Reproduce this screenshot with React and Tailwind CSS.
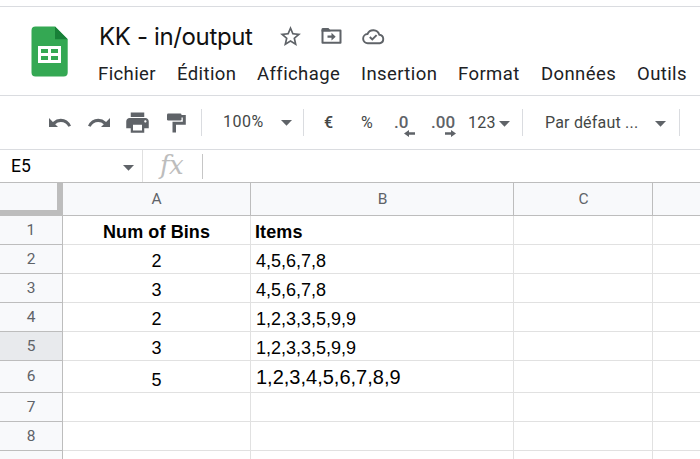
import { MdStarBorder, MdPrint } from 'react-icons/md';

const menus = [
  ['Fichier', 'w-[79px]'],
  ['Édition', 'w-[80px]'],
  ['Affichage', 'w-[104px]'],
  ['Insertion', 'w-[97px]'],
  ['Format', 'w-[83px]'],
  ['Données', 'w-[96px]'],
  ['Outils', 'w-[60px]'],
];

const rows = [
  { n: 1, a: 'Num of Bins', b: 'Items', bold: true },
  { n: 2, a: '2', b: '4,5,6,7,8' },
  { n: 3, a: '3', b: '4,5,6,7,8' },
  { n: 4, a: '2', b: '1,2,3,3,5,9,9' },
  { n: 5, a: '3', b: '1,2,3,3,5,9,9', selected: true },
  { n: 6, a: '5', b: '1,2,3,4,5,6,7,8,9', tall: true },
  { n: 7, a: '', b: '' },
  { n: 8, a: '', b: '' },
  { n: '', a: '', b: '' },
];

function Caret({ className = '' }) {
  return (
    <svg className={'shrink-0 ' + className} width="11" height="6" viewBox="0 0 11 6">
      <path d="M0 0h11L5.5 5.8z" fill="#5f6368" />
    </svg>
  );
}

function Divider({ className = '' }) {
  return <div className={'h-[27px] w-px shrink-0 bg-[#dadce0] ' + className} />;
}

function SheetsLogo() {
  return (
    <svg className="ml-[31px] mt-[19px] shrink-0" width="38" height="51" viewBox="0 0 38 51">
      <path d="M4.5.5H24l12.7 12.7v33.3a4 4 0 0 1-4 4H4.5a4 4 0 0 1-4-4v-42a4 4 0 0 1 4-4z" fill="#34a853" />
      <path d="M24 .5l12.7 12.7H24z" fill="#188038" />
      <path d="M7 20h23v17H7z" fill="#fff" />
      <path d="M10 23h7v4h-7zM20 23h7v4h-7zM10 30h7v4h-7zM20 30h7v4h-7z" fill="#34a853" />
    </svg>
  );
}

function UndoArrow({ flip, className }) {
  return (
    <svg className={'shrink-0 ' + (flip ? '-scale-x-100 ' : '') + className} width="22" height="10" viewBox="0 0 22 10">
      <path d="M0 0V9h9L6.200 6.200Q8.500 4 11.800 4Q17 4 19.400 8.800L22 7.800Q18.800 .8 11.800 .8Q7.300 .8 3.900 3.900z" fill="#5f6368" />
    </svg>
  );
}

function MoveFolder() {
  return (
    <svg className="ml-[18px] mt-[4px] shrink-0" width="22" height="18" viewBox="0 0 22 18">
      <path d="M1.500 3.500h18v12.300h-18z" fill="none" stroke="#5f6368" strokeWidth="2" strokeLinejoin="round" />
      <path d="M.5 4.500V2.400Q.5 1 2 1h5.500l2 2.500v1z" fill="#5f6368" />
      <path d="M6.500 8.600h4V5.800l4.200 3.900-4.200 3.900v-2.800h-4z" fill="#5f6368" />
    </svg>
  );
}

function CloudDone() {
  return (
    <svg className="ml-[19px] mt-[4px] shrink-0" width="23" height="17" viewBox="0 0 23 17">
      <path d="M6 15.200a4.600 4.600 0 0 1-.5-9.200A6.300 6.300 0 0 1 17.300 6.700a4.300 4.300 0 0 1 .5 8.500z" fill="none" stroke="#5f6368" strokeWidth="1.9" />
      <path d="M7.800 9l2.500 2.400 4.300-4.300" fill="none" stroke="#5f6368" strokeWidth="1.9" />
    </svg>
  );
}

function DecimalButton({ label, add, className }) {
  return (
    <div className={'flex shrink-0 flex-col text-[17px] font-medium leading-[20px] text-[#5f6368] ' + className}>
      <span className="-mt-[2px]">{label}</span>
      <svg className="-mt-[2px] self-end" width="11" height="7" viewBox="0 0 11 7">
        <path d={add ? 'M0 2.200h6V0L11 3.500 6 7V4.800H0z' : 'M11 2.200H5V0L0 3.500 5 7V4.800H11z'} fill="#5f6368" />
      </svg>
    </div>
  );
}

export default function App() {
  return (
    <div className="flex h-[459px] w-[700px] flex-col overflow-hidden whitespace-nowrap bg-white font-['Roboto',sans-serif]">
      <div className="h-[7px] shrink-0 border-b border-[#dadce0]" />
      <header className="flex h-[89px] shrink-0 border-b border-[#dadce0]">
        <SheetsLogo />
        <div className="ml-[29px] flex flex-col">
          <div className="flex h-[54px] items-center text-[#5f6368]">
            <h1 className="w-[180px] pl-px pt-[6px] font-['Inter',sans-serif] text-[24px] leading-[30px] tracking-[-0.36px] text-[#111]">KK - in/output</h1>
            <MdStarBorder className="mt-[4px] shrink-0" size={25} />
            <MoveFolder />
            <CloudDone />
          </div>
          <nav className="flex text-[18.5px] leading-[26px] tracking-[0.4px] text-[#202124]">
            {menus.map(([label, width]) => (
              <div key={label} className={'shrink-0 ' + width}>{label}</div>
            ))}
          </nav>
        </div>
      </header>

      <div className="flex h-[54px] shrink-0 items-center border-b border-[#dadce0] text-[16px] text-[#444746]">
        <UndoArrow className="ml-[49px]" />
        <UndoArrow flip className="ml-[17px]" />
        <MdPrint className="ml-[14px] shrink-0 text-[#5f6368]" size={27} />
        <svg className="ml-[16px] shrink-0" width="19" height="20" viewBox="0 0 19 20" fill="#5f6368">
          <rect x="0" y="0.500" width="14.500" height="7" rx="1.200" />
          <path d="M14 2h4.800v9.800H9V19.500H5.500V8.800h10.300V4.500H14z" />
        </svg>
        <Divider className="ml-[15px]" />
        <span className="-mt-[2px] ml-[21px] w-[58px] tracking-[0.5px]">100%</span>
        <Caret />
        <Divider className="ml-[11px]" />
        <span className="ml-[20px] w-[37px] font-medium">€</span>
        <span className="w-[33px]">%</span>
        <DecimalButton label=".0" className="mt-[5px] w-[21px]" />
        <DecimalButton add label=".00" className="ml-[16px] mt-[5px] w-[25px]" />
        <span className="ml-[12px] w-[31px] tracking-[0.3px]">123</span>
        <Caret className="mt-[2px]" />
        <Divider className="ml-[12px]" />
        <span className="ml-[22px] w-[110px] tracking-[0.2px]">Par défaut ...</span>
        <Caret className="mt-[2px]" />
        <Divider className="ml-[13px]" />
      </div>

      <div className="flex h-[33px] shrink-0 items-center border-b border-[#bdbdbd]">
        <span className="ml-[11px] w-[112px] text-[17.5px] text-black">E5</span>
        <Caret className="mt-[4px]" />
        <div className="ml-[8px] h-full w-px bg-[#e0e0e0]" />
        <span className="-mt-[2px] ml-[17px] w-[42px] font-['DejaVu_Serif','Liberation_Serif',serif] text-[26px] italic leading-[28px] tracking-[-0.5px] text-[#bdbdbd]">fx</span>
        <div className="h-[25px] w-px bg-[#c6c6c6]" />
      </div>

      <div className="flex h-[33px] shrink-0 border-b border-[#bdbdbd] bg-[#f8f9fb] text-center text-[15.5px] leading-[32px] text-[#5f6368]">
        <div className="-mb-px h-[33px] w-[63px] shrink-0 border-b-[6px] border-r-[6px] border-[#bdbdbd]" />
        <div className="w-[188px] shrink-0 border-r border-[#bdbdbd]">A</div>
        <div className="w-[263px] shrink-0 border-r border-[#bdbdbd] pl-px">B</div>
        <div className="w-[139px] shrink-0 border-r border-[#bdbdbd] pl-px">C</div>
      </div>

      {rows.map(({ n, a, b, bold, tall, selected }, i) => (
        <div
          key={i}
          className={"flex shrink-0 font-['Liberation_Sans',sans-serif] text-[18px] text-black " + (tall ? 'h-[32px] ' : 'h-[29px] ') + (bold ? 'font-bold tracking-[0.1px]' : '')}
        >
          <div className={"w-[63px] shrink-0 border-b border-r border-[#bdbdbd] text-center font-['Roboto',sans-serif] text-[15.5px] font-normal text-[#5f6368] " + (tall ? 'leading-[31px] ' : 'leading-[28px] ') + (selected ? 'bg-[#e8eaed]' : 'bg-[#f8f9fb]')}>
            {n}
          </div>
          <div className="flex w-[188px] shrink-0 items-end justify-center border-b border-r border-[#e1e1e1] leading-[24px]">{a}</div>
          <div className={'flex w-[263px] shrink-0 items-end border-b border-r border-[#e1e1e1] ' + (bold ? 'pl-[4px] ' : 'pl-[5px] ') + (tall ? 'text-[20px] leading-[30px]' : 'leading-[24px]')}>{b}</div>
          <div className="w-[139px] shrink-0 border-b border-r border-[#e1e1e1]" />
          <div className="flex-1 border-b border-[#e1e1e1]" />
        </div>
      ))}
    </div>
  );
}
